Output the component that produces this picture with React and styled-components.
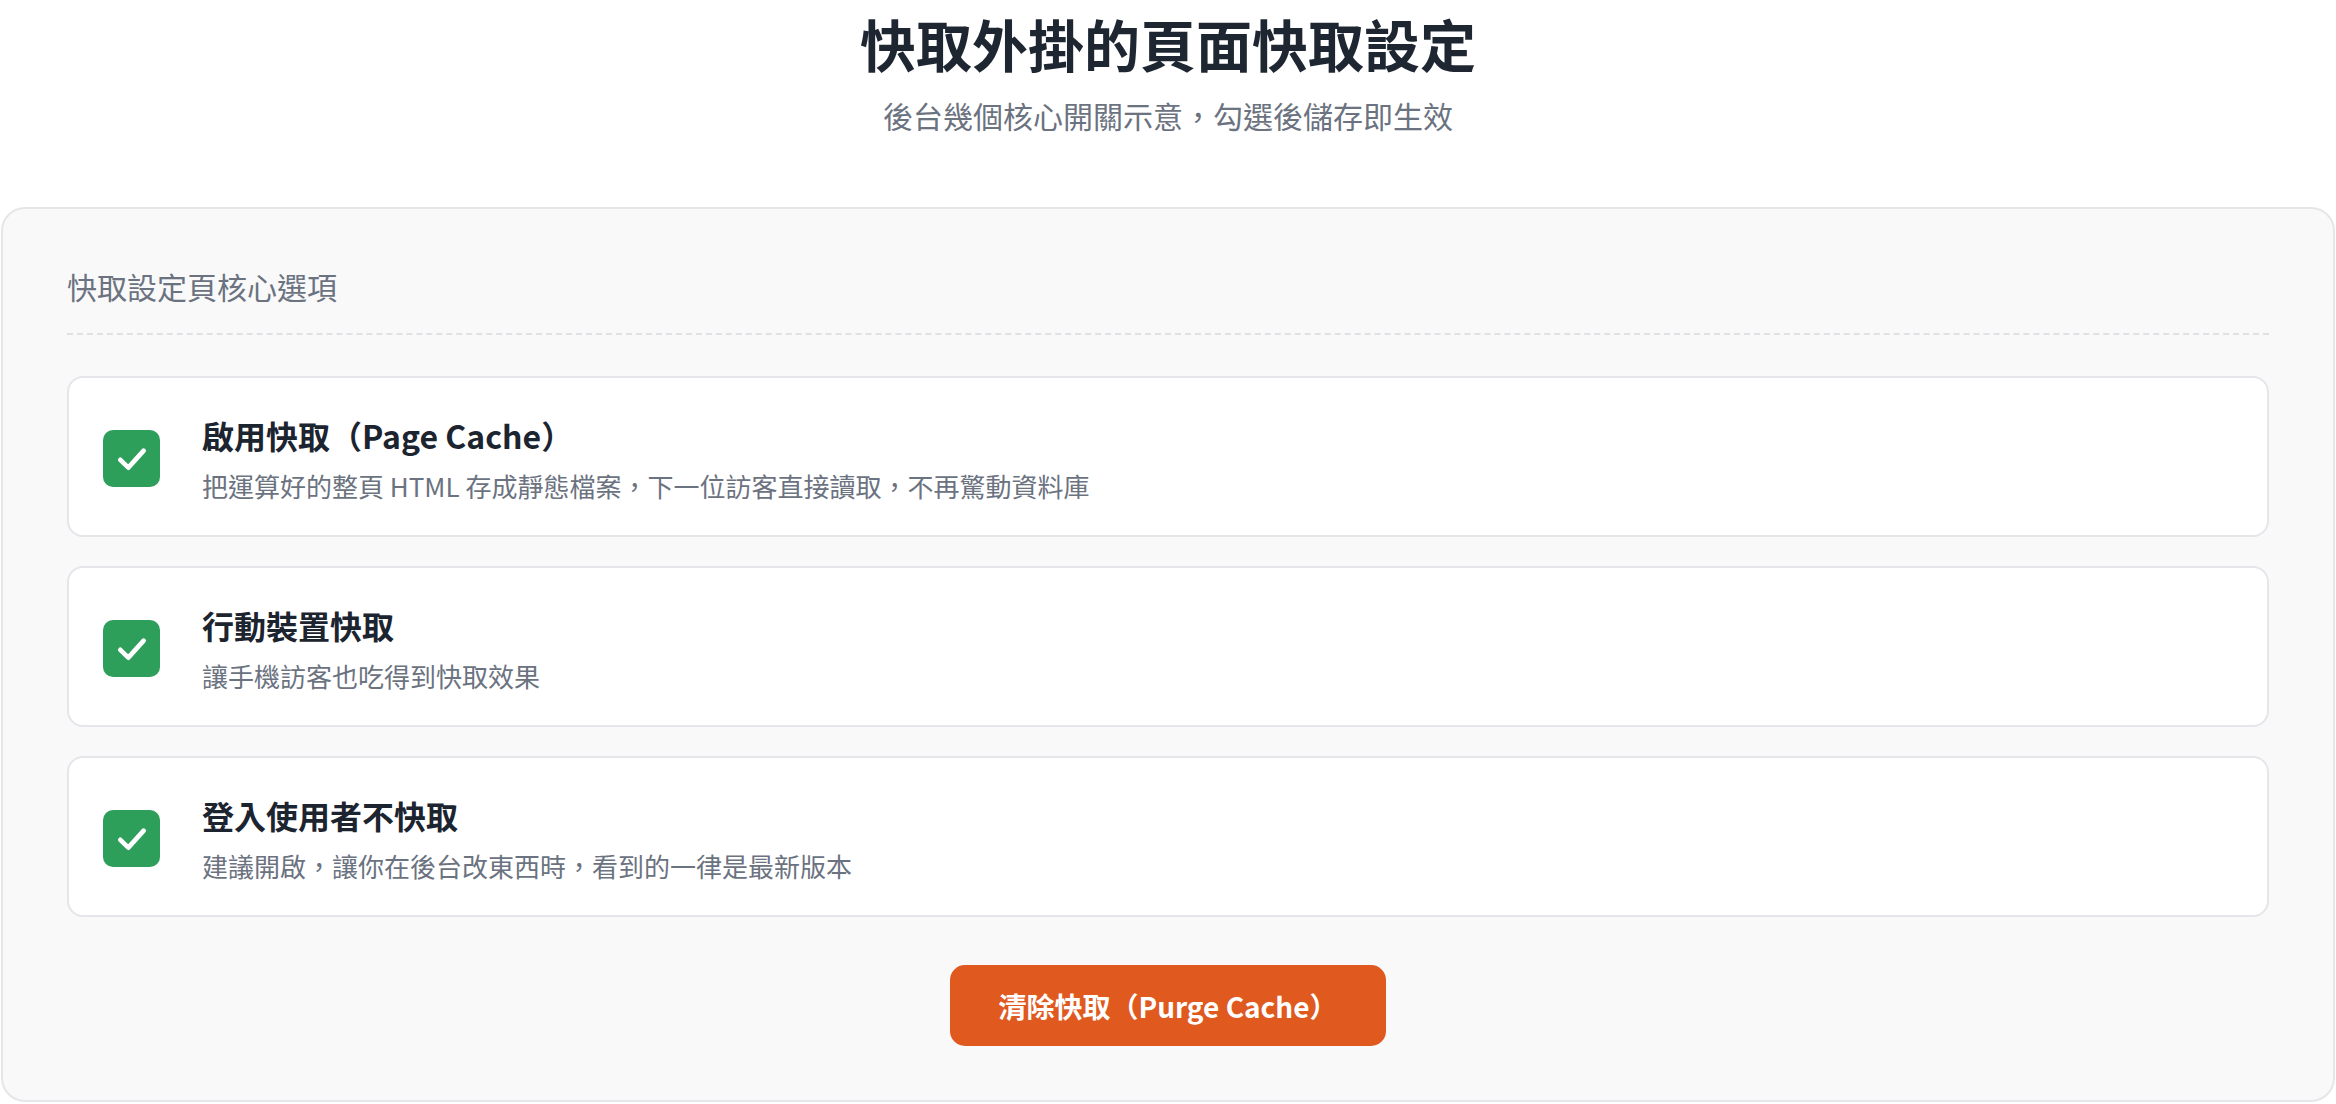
import React from 'react';
import styled, { createGlobalStyle } from 'styled-components';

const GlobalStyle = createGlobalStyle`
  body {
    margin: 0;
    background: #ffffff;
    font-family: "Noto Sans CJK TC", "Noto Sans", sans-serif;
    color: #1e2632;
  }
`;

const Page = styled.div`
  padding-top: 9px;
`;

const Header = styled.header`
  text-align: center;
`;

const Title = styled.h1`
  margin: 0;
  font-size: 56px;
  line-height: 68px;
  font-weight: 700;
  color: #1e2632;
`;

const Subtitle = styled.p`
  margin: 18px 0 0;
  font-size: 30px;
  line-height: 40px;
  color: #6b7280;
`;

const Panel = styled.section`
  margin: 72px 1px 0;
  padding: 56px 64px 54px;
  background: #f9f9fa;
  border: 2px solid #e6e6ea;
  border-radius: 24px;
`;

const PanelLabel = styled.h2`
  margin: 0;
  padding-bottom: 26px;
  font-size: 30px;
  line-height: 42px;
  font-weight: 400;
  color: #6b7280;
  border-bottom: 2px dashed #dfe1e5;
`;

const OptionList = styled.div`
  display: flex;
  flex-direction: column;
  gap: 29px;
  margin-top: 41px;
`;

const Option = styled.label`
  display: flex;
  align-items: center;
  gap: 42px;
  padding: 35px 34px 31px;
  background: #ffffff;
  border: 2px solid #e4e6ea;
  border-radius: 16px;
  cursor: pointer;
`;

const Box = styled.span`
  flex: none;
  display: flex;
  align-items: center;
  justify-content: center;
  width: 57px;
  height: 57px;
  border-radius: 10px;
  background: ${(p) => (p.checked ? '#2e9e5b' : '#ffffff')};
`;

const OptionText = styled.div`
  display: flex;
  flex-direction: column;
  gap: 11px;
`;

const OptionTitle = styled.span`
  font-size: 32px;
  line-height: 44px;
  font-weight: 700;
  color: #1c2430;
`;

const OptionDesc = styled.span`
  font-size: 26px;
  line-height: 36px;
  color: #6b7280;
`;

const Actions = styled.div`
  display: flex;
  justify-content: center;
  margin-top: 48px;
`;

const PurgeButton = styled.button`
  height: 81px;
  padding: 0 48px;
  border: none;
  border-radius: 15px;
  background: #e0591f;
  color: #ffffff;
  font-family: inherit;
  font-size: 28px;
  font-weight: 700;
  cursor: pointer;
`;

const options = [
  {
    title: '啟用快取（Page Cache）',
    desc: '把運算好的整頁 HTML 存成靜態檔案，下一位訪客直接讀取，不再驚動資料庫',
  },
  {
    title: '行動裝置快取',
    desc: '讓手機訪客也吃得到快取效果',
  },
  {
    title: '登入使用者不快取',
    desc: '建議開啟，讓你在後台改東西時，看到的一律是最新版本',
  },
];

function Check({ checked }) {
  return (
    <Box checked={checked}>
      {checked && (
        <svg width="40" height="40" viewBox="0 0 24 24" fill="none">
          <polyline
            points="5 12.5 9.8 17.2 19 7"
            stroke="#ffffff"
            strokeWidth="2.8"
            strokeLinecap="round"
            strokeLinejoin="round"
          />
        </svg>
      )}
    </Box>
  );
}

export default function App() {
  return (
    <Page>
      <GlobalStyle />
      <Header>
        <Title>快取外掛的頁面快取設定</Title>
        <Subtitle>後台幾個核心開關示意，勾選後儲存即生效</Subtitle>
      </Header>

      <Panel>
        <PanelLabel>快取設定頁核心選項</PanelLabel>
        <OptionList>
          {options.map((o) => (
            <Option key={o.title}>
              <Check checked />
              <OptionText>
                <OptionTitle>{o.title}</OptionTitle>
                <OptionDesc>{o.desc}</OptionDesc>
              </OptionText>
            </Option>
          ))}
        </OptionList>
        <Actions>
          <PurgeButton>清除快取（Purge Cache）</PurgeButton>
        </Actions>
      </Panel>
    </Page>
  );
}
